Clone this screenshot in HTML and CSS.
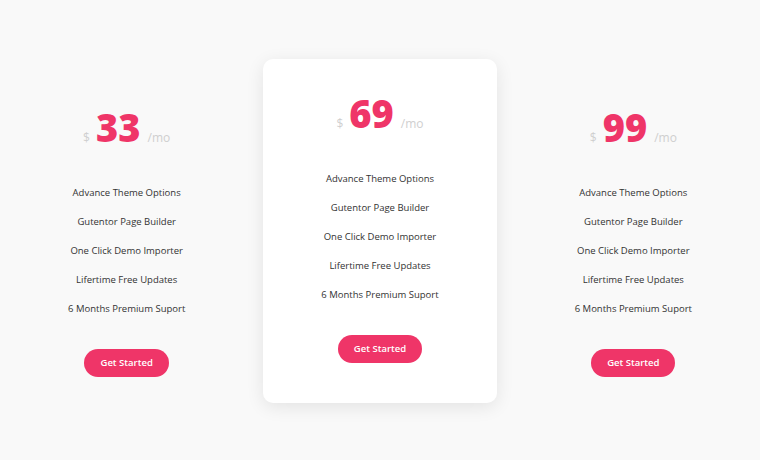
FILE: index.html
```html
<!DOCTYPE html>
<html>
<head>
<meta charset="utf-8">
<link rel="stylesheet" href="styles.css">
</head>
<body>
<div class="plans">
  <div class="plan">
    <div class="price"><span class="cur">$</span><span class="amt">33</span><span class="per">/mo</span></div>
    <ul class="features">
      <li>Advance Theme Options</li>
      <li>Gutentor Page Builder</li>
      <li>One Click Demo Importer</li>
      <li>Lifertime Free Updates</li>
      <li>6 Months Premium Suport</li>
    </ul>
    <a class="btn">Get Started</a>
  </div>
  <div class="plan featured">
    <div class="price"><span class="cur">$</span><span class="amt">69</span><span class="per">/mo</span></div>
    <ul class="features">
      <li>Advance Theme Options</li>
      <li>Gutentor Page Builder</li>
      <li>One Click Demo Importer</li>
      <li>Lifertime Free Updates</li>
      <li>6 Months Premium Suport</li>
    </ul>
    <a class="btn">Get Started</a>
  </div>
  <div class="plan">
    <div class="price"><span class="cur">$</span><span class="amt">99</span><span class="per">/mo</span></div>
    <ul class="features">
      <li>Advance Theme Options</li>
      <li>Gutentor Page Builder</li>
      <li>One Click Demo Importer</li>
      <li>Lifertime Free Updates</li>
      <li>6 Months Premium Suport</li>
    </ul>
    <a class="btn">Get Started</a>
  </div>
</div>
</body>
</html>
```
FILE: styles.css
```css
html, body {
  margin: 0;
  padding: 0;
}
body {
  width: 760px;
  height: 460px;
  background: #f9f9f9;
  font-family: "Open Sans", sans-serif;
  overflow: hidden;
}
.plans {
  display: grid;
  grid-template-columns: repeat(3, 1fr);
  align-items: center;
  height: 460px;
}
.plan {
  margin: 30px 10px 0;
  padding: 35px 0 40px;
  display: flex;
  flex-direction: column;
  align-items: center;
  border-radius: 10px;
}
.plan.featured {
  margin-top: 2px;
  background: #fff;
  box-shadow: 0 4px 18px rgba(0, 0, 0, 0.09);
}
.price {
  display: flex;
  align-items: baseline;
  line-height: 1;
}
.cur {
  font-size: 12px;
  color: #cfcfcf;
  margin-right: 6px;
}
.amt {
  font-size: 38px;
  font-weight: 800;
  color: #ef3568;
}
.per {
  font-size: 12px;
  color: #cfcfcf;
  margin-left: 7px;
}
.features {
  list-style: none;
  margin: 32px 0 0;
  padding: 0;
  text-align: center;
}
.features li {
  font-size: 9.5px;
  line-height: 29px;
  color: #333;
}
.btn {
  margin-top: 26px;
  display: inline-block;
  height: 28px;
  line-height: 28px;
  padding: 0 16px;
  border-radius: 14px;
  background: #ef3568;
  color: #fff;
  font-size: 9.5px;
  font-weight: 600;
}
```
